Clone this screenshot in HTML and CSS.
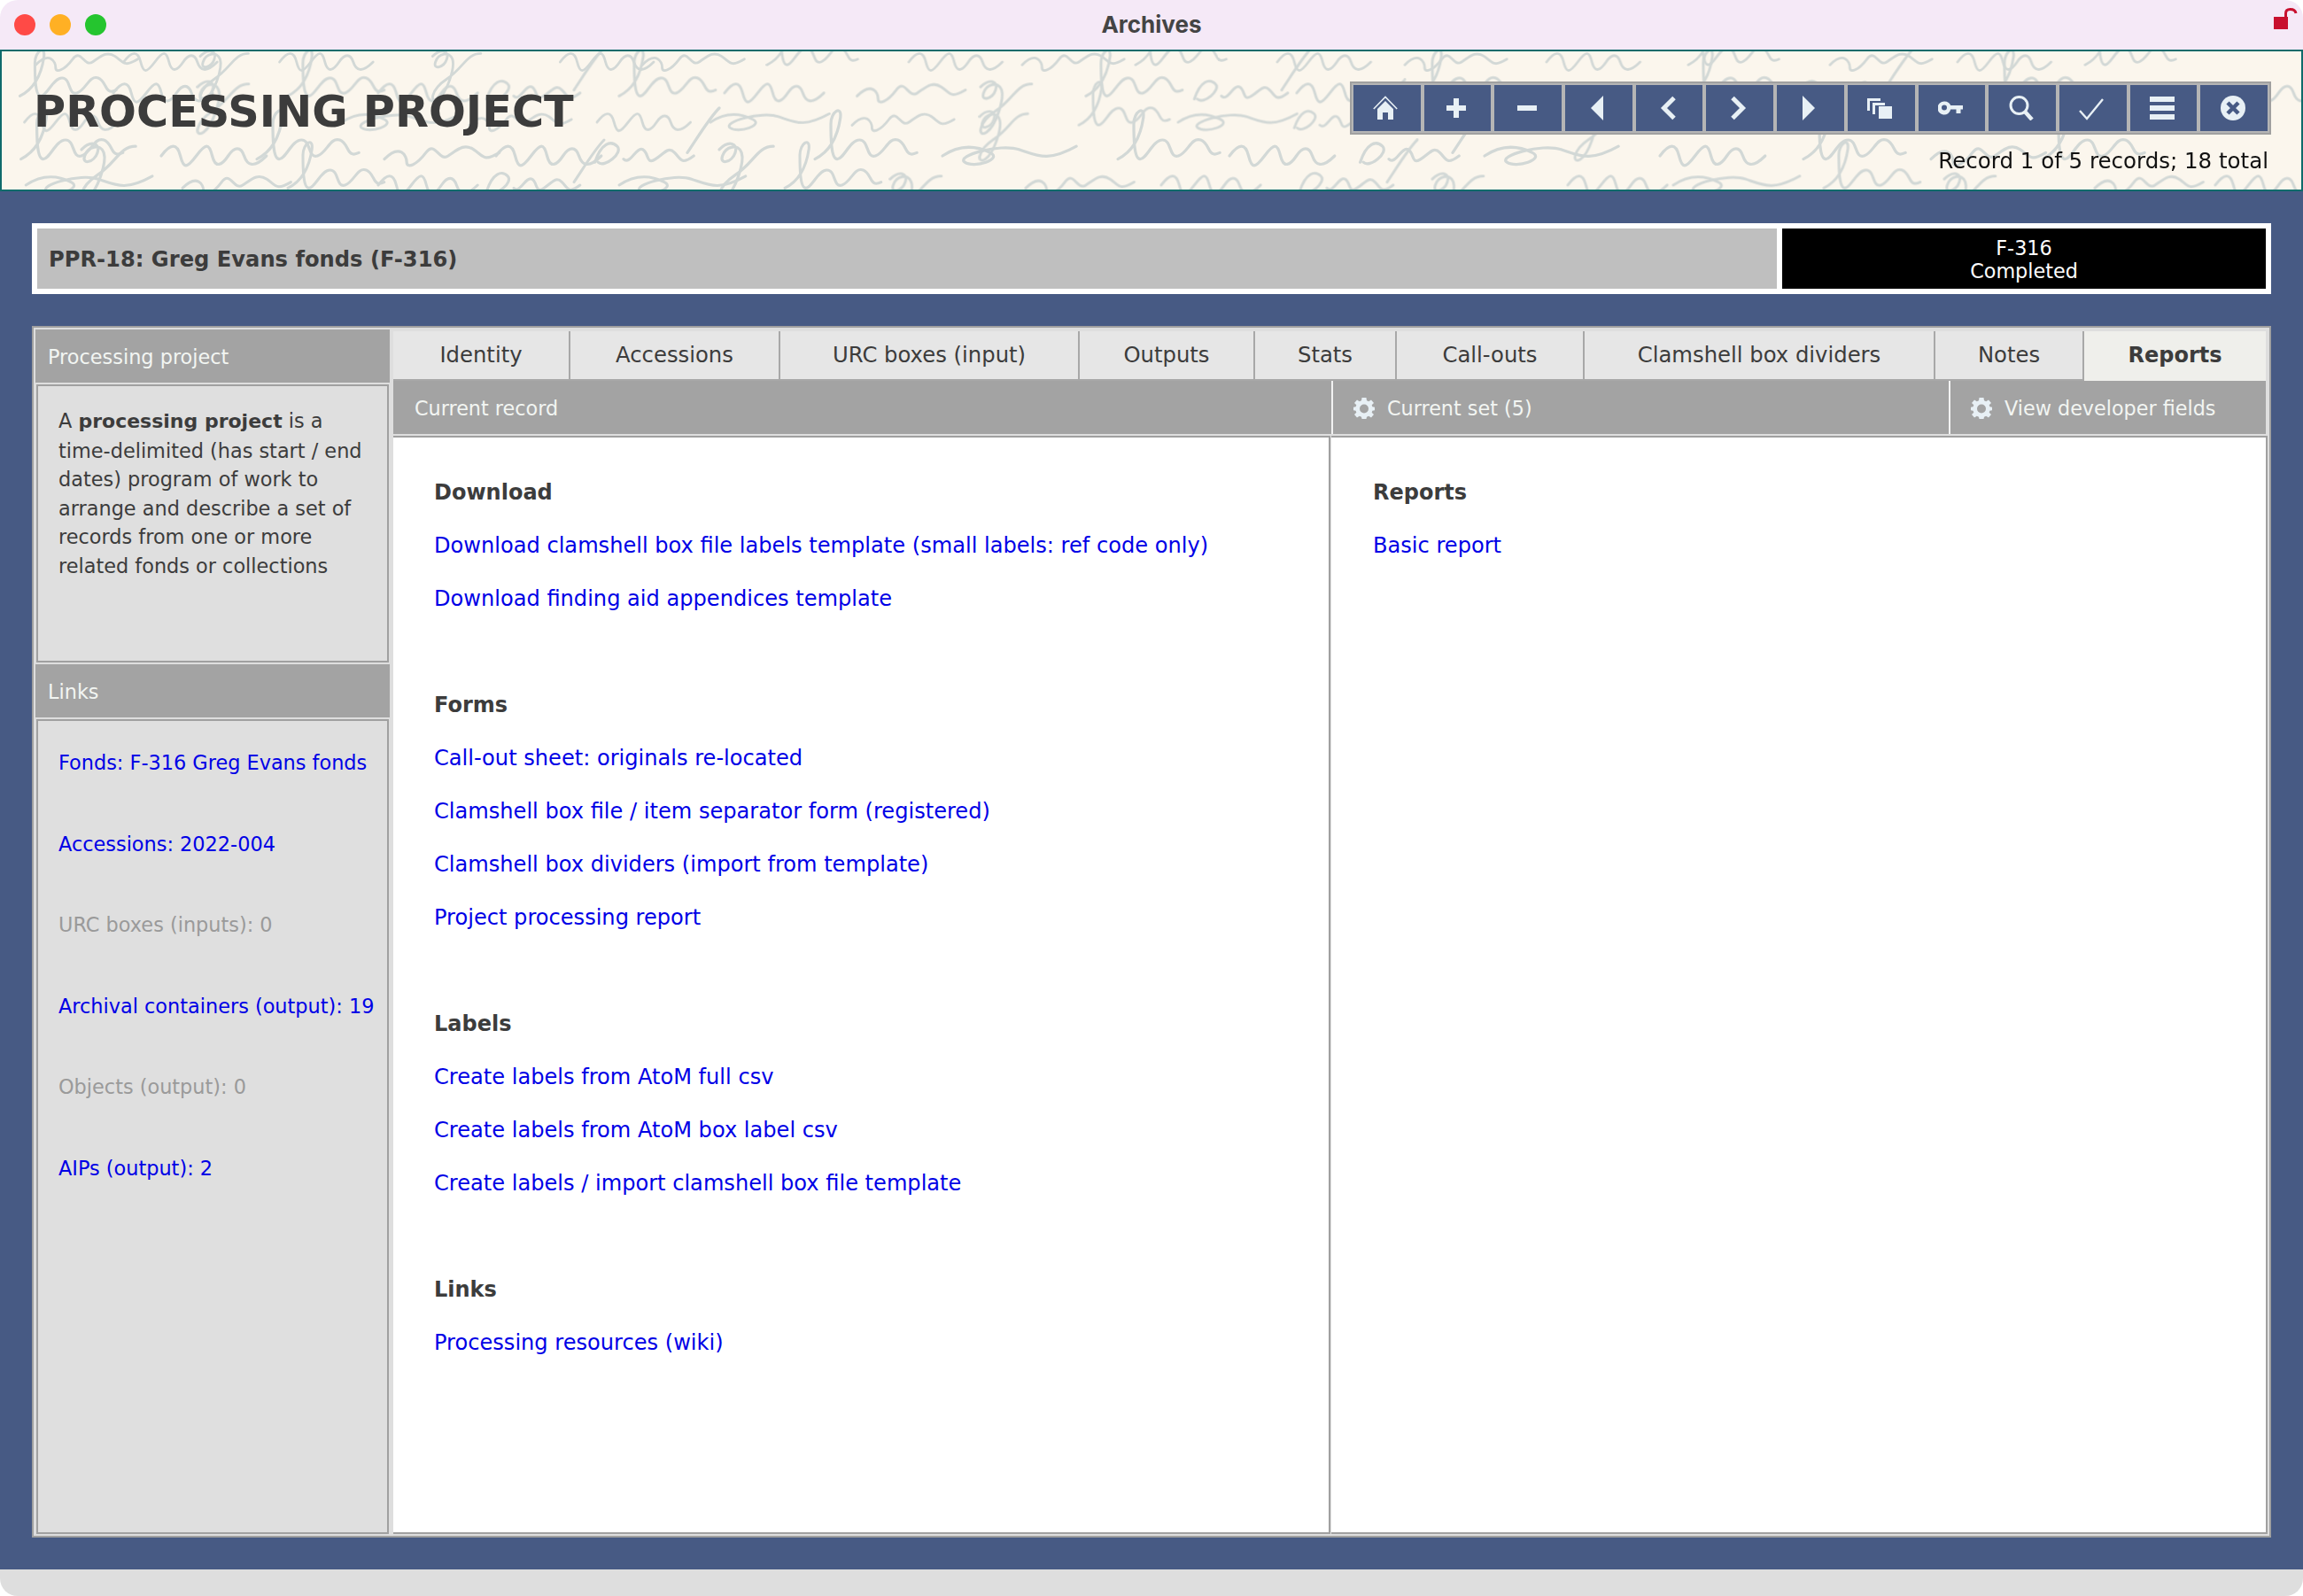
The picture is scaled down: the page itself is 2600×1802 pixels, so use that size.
FILE: index.html
```html
<!DOCTYPE html>
<html lang="en">
<head>
    <meta charset="UTF-8">
    <title>Archives</title>
    <link rel="stylesheet" href="styles.css">
</head>
<body>
<div class="window">
    <div class="titlebar">
        <div class="lights">
            <span class="light red"></span>
            <span class="light amber"></span>
            <span class="light green"></span>
        </div>
        <div class="window-title">Archives</div>
        <svg class="lock" viewBox="0 0 27 24"><rect x="0" y="10" width="16" height="14" fill="#c8102e"/><path d="M13.500 11V6C13.500 3 15.500 1.500 18.500 1.500C22 1.500 24.500 3 25 6" fill="none" stroke="#c8102e" stroke-width="3"/></svg>
    </div>

    <div class="page-header">
        <svg class="script" viewBox="0 0 2596 156" preserveAspectRatio="none">
            <defs>
                <path id="w1" d="M0 10c6-8 10-8 12 0s4 8 10 0 8-8 10 0 6 6 10 0 8-6 10 0 6 8 14 0"/>
                <path id="w2" d="M0 12c8-4 14-12 16-26 1-8-6-4-6 4s0 22 4 22 8-12 14-12 4 12 10 10 8-12 14-10 4 12 12 8"/>
                <path id="w3" d="M0 6c6-6 12-4 10 2s-10 8-8 2 10-8 12-2-4 24-10 28-6-6 6-14 14-18 24-18"/>
                <path id="w4" d="M0 12c10-10 14-2 14 2s6 2 12-6 8 6 14 2 10-8 16-4 6 8 16 2"/>
                <path id="w5" d="M2 14c4-12 10-14 14-10s-8 14-12 10M20 12c4 4 8-8 12-6s2 10 8 6 8-8 12-4 4 8 12 2M60 8c8-12 14-22 20-28"/>
                <path id="w6" d="M0 10c12-8 22-6 30-2s-10 10-16 6 22-12 34-8 18 8 36-2"/>
            </defs>
            <g class="script-lines" fill="none" stroke-width="1.800" stroke-linecap="round" stroke-linejoin="round">
                <g transform="translate(0,-4) scale(1.600)">
                    <use href="#w4" x="24"/><use href="#w1" x="86"/><use href="#w3" x="140"/><use href="#w1" x="196"/><use href="#w3" x="304"/><use href="#w1" x="394"/><use href="#w4" x="452"/><use href="#w2" x="540"/><use href="#w1" x="640"/><use href="#w4" x="720"/><use href="#w2" x="800"/><use href="#w1" x="900"/><use href="#w4" x="990"/><use href="#w1" x="1090"/><use href="#w2" x="1190"/><use href="#w4" x="1290"/><use href="#w1" x="1380"/><use href="#w2" x="1470"/>
                </g>
                <g transform="translate(0,30) scale(1.700)">
                    <use href="#w2" x="12"/><use href="#w1" x="74"/><use href="#w3" x="130"/><use href="#w2" x="190"/><use href="#w1" x="250"/><use href="#w5" x="320"/><use href="#w2" x="410"/><use href="#w1" x="480"/><use href="#w4" x="568"/><use href="#w3" x="650"/><use href="#w2" x="720"/><use href="#w5" x="790"/><use href="#w1" x="860"/><use href="#w2" x="940"/><use href="#w6" x="1000"/><use href="#w2" x="1120"/><use href="#w5" x="1190"/><use href="#w1" x="1260"/><use href="#w2" x="1320"/><use href="#w4" x="1400"/><use href="#w1" x="1470"/>
                </g>
                <g transform="translate(0,64) scale(1.600)">
                    <use href="#w1" x="16"/><use href="#w6" x="240"/><use href="#w4" x="330"/><use href="#w1" x="420"/><use href="#w6" x="500"/><use href="#w4" x="600"/><use href="#w3" x="690"/><use href="#w2" x="760"/><use href="#w6" x="830"/><use href="#w5" x="910"/><use href="#w1" x="1010"/><use href="#w3" x="1110"/><use href="#w4" x="1200"/><use href="#w2" x="1300"/><use href="#w1" x="1390"/><use href="#w6" x="1480"/>
                </g>
                <g transform="translate(0,100) scale(1.800)">
                    <use href="#w2" x="12"/><use href="#w3" x="50"/><use href="#w1" x="100"/><use href="#w2" x="160"/><use href="#w4" x="240"/><use href="#w1" x="310"/><use href="#w5" x="370"/><use href="#w3" x="450"/><use href="#w2" x="510"/><use href="#w6" x="590"/><use href="#w2" x="700"/><use href="#w1" x="770"/><use href="#w5" x="850"/><use href="#w6" x="930"/><use href="#w1" x="1040"/><use href="#w2" x="1130"/><use href="#w4" x="1210"/><use href="#w2" x="1280"/>
                </g>
                <g transform="translate(0,134) scale(1.700)">
                    <use href="#w6" x="16"/><use href="#w4" x="120"/><use href="#w2" x="190"/><use href="#w1" x="250"/><use href="#w5" x="320"/><use href="#w6" x="410"/><use href="#w2" x="520"/><use href="#w3" x="590"/><use href="#w4" x="680"/><use href="#w1" x="770"/><use href="#w5" x="860"/><use href="#w3" x="950"/><use href="#w1" x="1040"/><use href="#w6" x="1110"/><use href="#w2" x="1210"/><use href="#w3" x="1290"/><use href="#w4" x="1390"/><use href="#w1" x="1470"/>
                </g>
            </g>
        </svg>
        <h1>PROCESSING PROJECT</h1>
        <div class="toolbar-wrap">
            <div class="toolbar">
                <a class="tool"><svg viewBox="0 0 28 28"><path d="M5 15L14 6L23 15V27H17V19H11V27H5Z"/><path d="M0.800 15L14 1.500L27.200 15" fill="none" stroke="#e8f0f5" stroke-width="1.600"/></svg></a>
                <a class="tool"><svg viewBox="0 0 28 28"><path d="M11 3H17V11H25V17H17V25H11V17H3V11H11Z"/></svg></a>
                <a class="tool"><svg viewBox="0 0 28 28"><rect x="3" y="11" width="22" height="6"/></svg></a>
                <a class="tool"><svg viewBox="0 0 28 28"><path d="M21 0V28L7 14Z"/></svg></a>
                <a class="tool"><svg viewBox="0 0 28 28"><path d="M21 2.500L9.500 14L21 25.500" fill="none" stroke="#e8f0f5" stroke-width="5"/></svg></a>
                <a class="tool"><svg viewBox="0 0 28 28"><path d="M7 2.500L18.500 14L7 25.500" fill="none" stroke="#e8f0f5" stroke-width="5"/></svg></a>
                <a class="tool"><svg viewBox="0 0 28 28"><path d="M7 0V28L21 14Z"/></svg></a>
                <a class="tool"><svg viewBox="0 0 28 28"><path d="M0 3H15V6H3V17H0Z"/><path d="M6 8H20V11H9V21H6Z"/><rect x="13" y="12" width="15" height="14"/></svg></a>
                <a class="tool"><svg viewBox="0 0 28 28"><path fill-rule="evenodd" d="M7 6.500A7.500 7.500 0 0 1 14.200 11H28V15.500H25.500V20H20.500V15.500H14.200A7.500 7.500 0 1 1 7 6.500ZM7 10.500A3 3 0 1 0 7 16.500A3 3 0 1 0 7 10.500Z"/></svg></a>
                <a class="tool"><svg viewBox="0 0 28 28"><circle cx="11.500" cy="11" r="9.500" fill="none" stroke="#e8f0f5" stroke-width="3"/><path d="M18 18L26 27" fill="none" stroke="#e8f0f5" stroke-width="4.500"/></svg></a>
                <a class="tool"><svg viewBox="0 0 28 28"><path d="M1 17L9 26L27 4" fill="none" stroke="#e8f0f5" stroke-width="2.400"/></svg></a>
                <a class="tool"><svg viewBox="0 0 28 28"><rect x="0" y="1" width="28" height="6"/><rect x="0" y="11" width="28" height="6"/><rect x="0" y="21" width="28" height="6"/></svg></a>
                <a class="tool"><svg viewBox="0 0 28 28"><circle cx="14" cy="14" r="14"/><path d="M8 8L20 20M20 8L8 20" fill="none" stroke="#475a84" stroke-width="4.500"/></svg></a>
            </div>
            <div class="record-count">Record 1 of 5 records; 18 total</div>
        </div>
    </div>

    <div class="main">
        <div class="record-bar">
            <div class="record-name">PPR-18: Greg Evans fonds (F-316)</div>
            <div class="record-status">F-316<br>Completed</div>
        </div>

        <div class="panel">
            <div class="sidebar">
                <div class="side-head">Processing project</div>
                <div class="side-box about">
                    A <b>processing project</b> is a<br>
                    time-delimited (has start / end dates) program of work to arrange and describe a set of records from one or more related fonds or collections
                </div>
                <div class="side-head">Links</div>
                <div class="side-box links">
                    <a href="#">Fonds: F-316 Greg Evans fonds</a>
                    <a href="#">Accessions: 2022-004</a>
                    <span>URC boxes (inputs): 0</span>
                    <a href="#">Archival containers (output): 19</a>
                    <span>Objects (output): 0</span>
                    <a href="#">AIPs (output): 2</a>
                </div>
            </div>

            <div class="content">
                <div class="tabs">
                    <div class="tab">Identity</div>
                    <div class="tab">Accessions</div>
                    <div class="tab">URC boxes (input)</div>
                    <div class="tab">Outputs</div>
                    <div class="tab">Stats</div>
                    <div class="tab">Call-outs</div>
                    <div class="tab">Clamshell box dividers</div>
                    <div class="tab">Notes</div>
                    <div class="tab active">Reports</div>
                </div>
                <div class="subhead">
                    <div class="sub-cell">Current record</div>
                    <div class="sub-cell">
                        <svg class="gear" viewBox="0 0 24 24"><path fill-rule="evenodd" d="M9.500 0H14.500L15 3.300L17.200 4.300L20 2.400L23 5.900L20.700 8.300L21.400 10.300L24 10.800V14.200L21.400 14.700L20.700 16.700L23 19.100L20 22.600L17.200 20.700L15 21.700L14.500 24H9.500L9 21.700L6.800 20.700L4 22.600L1 19.100L3.300 16.700L2.600 14.700L0 14.200V10.800L2.600 10.300L3.300 8.300L1 5.900L4 2.400L6.800 4.300L9 3.300ZM12 7.500A5 5 0 1 0 12 17.500A5 5 0 1 0 12 7.500Z"/></svg>
                        Current set (5)
                    </div>
                    <div class="sub-cell">
                        <svg class="gear" viewBox="0 0 24 24"><path fill-rule="evenodd" d="M9.500 0H14.500L15 3.300L17.200 4.300L20 2.400L23 5.900L20.700 8.300L21.400 10.300L24 10.800V14.200L21.400 14.700L20.700 16.700L23 19.100L20 22.600L17.200 20.700L15 21.700L14.500 24H9.500L9 21.700L6.800 20.700L4 22.600L1 19.100L3.300 16.700L2.600 14.700L0 14.200V10.800L2.600 10.300L3.300 8.300L1 5.900L4 2.400L6.800 4.300L9 3.300ZM12 7.500A5 5 0 1 0 12 17.500A5 5 0 1 0 12 7.500Z"/></svg>
                        View developer fields
                    </div>
                </div>
                <div class="panes">
                    <div class="pane pane-left">
                        <section>
                            <h3>Download</h3>
                            <a href="#">Download clamshell box file labels template (small labels: ref code only)</a>
                            <a href="#">Download finding aid appendices template</a>
                        </section>
                        <section>
                            <h3>Forms</h3>
                            <a href="#">Call-out sheet: originals re-located</a>
                            <a href="#">Clamshell box file / item separator form (registered)</a>
                            <a href="#">Clamshell box dividers (import from template)</a>
                            <a href="#">Project processing report</a>
                        </section>
                        <section>
                            <h3>Labels</h3>
                            <a href="#">Create labels from AtoM full csv</a>
                            <a href="#">Create labels from AtoM box label csv</a>
                            <a href="#">Create labels / import clamshell box file template</a>
                        </section>
                        <section>
                            <h3>Links</h3>
                            <a href="#">Processing resources (wiki)</a>
                        </section>
                    </div>
                    <div class="pane pane-right">
                        <section>
                            <h3>Reports</h3>
                            <a href="#">Basic report</a>
                        </section>
                    </div>
                </div>
            </div>
        </div>
    </div>

    <div class="footer"></div>
</div>
</body>
</html>
```

FILE: styles.css
```css
* {
    box-sizing: border-box;
}

html, body {
    margin: 0;
    height: 100%;
}

body {
    font-family: "DejaVu Sans", Verdana, sans-serif;
    font-size: 24px;
    color: #3c3c3c;
    background-color: #fff;
}

a {
    color: #0000e6;
    text-decoration: none;
}

.window {
    display: flex;
    flex-direction: column;
    height: 1802px;
    border-radius: 20px;
    overflow: hidden;
}

/* title bar */
.titlebar {
    position: relative;
    height: 56px;
    background-color: #f5e9f7;
    display: flex;
    align-items: center;
    justify-content: center;
    padding-bottom: 2px;
}

.lights {
    position: absolute;
    left: 16px;
    top: 16px;
    display: flex;
    gap: 16px;
}

.light {
    width: 24px;
    height: 24px;
    border-radius: 50%;
}

.red { background-color: #ff4a46; }
.amber { background-color: #ffb024; }
.green { background-color: #25c52f; }

.window-title {
    font-family: Inter, sans-serif;
    font-weight: 700;
    font-size: 26px;
    color: #444;
}

.lock {
    position: absolute;
    right: 6px;
    top: 9px;
    width: 27px;
    height: 24px;
}

/* header with handwriting background */
.page-header {
    position: relative;
    height: 160px;
    background-color: #fbf6ed;
    border: 2px solid #0f6b6b;
    display: flex;
    justify-content: space-between;
    padding: 0 34px 0 36px;
}

.script {
    position: absolute;
    left: 0;
    top: 0;
    width: 100%;
    height: 100%;
}

.script-lines {
    stroke: #d2d8d6;
    filter: blur(0.7px);
}

.page-header h1 {
    position: relative;
    margin: 40px 0 0;
    font-size: 49.300px;
    line-height: 56px;
    font-weight: bold;
    color: #3c3c3c;
}

.toolbar-wrap {
    position: relative;
    margin-top: 34px;
    display: flex;
    flex-direction: column;
    align-items: flex-end;
}

.toolbar {
    display: grid;
    grid-template-columns: repeat(13, 1fr);
    gap: 4px;
    width: 1040px;
    height: 60px;
    padding: 2px;
    background-color: #b5b5b5;
    border: 2px solid #a0a0a0;
}

.tool {
    background-color: #475a84;
    display: flex;
    align-items: center;
    justify-content: center;
    padding-right: 3px;
}

.tool svg {
    width: 28px;
    height: 28px;
    fill: #e8f0f5;
}

.record-count {
    margin-top: 15px;
    line-height: 30px;
    font-size: 24.500px;
    color: #111;
    padding-right: 3px;
}

/* main area */
.main {
    flex: 1;
    background-color: #475a84;
    padding: 36px;
    display: flex;
    flex-direction: column;
    gap: 36px;
}

.footer {
    height: 30px;
    background-color: #dedede;
}

.record-bar {
    height: 80px;
    background-color: #fff;
    padding: 6px;
    display: flex;
    gap: 6px;
}

.record-name {
    flex: 1;
    background-color: #bfbfbf;
    padding: 1px 0 0 13px;
    display: flex;
    align-items: center;
    font-weight: bold;
    font-size: 24.200px;
}

.record-status {
    width: 546px;
    background-color: #000;
    color: #fff;
    text-align: center;
    font-size: 22.300px;
    line-height: 26px;
    padding-top: 9px;
}

.panel {
    flex: 1;
    border: 2px solid #a0a0a0;
    padding: 2px;
    background-color: #dedede;
    display: flex;
    gap: 4px;
}

/* left column */
.sidebar {
    width: 400px;
    display: flex;
    flex-direction: column;
    font-size: 22.400px;
}

.side-head {
    height: 60px;
    line-height: 62px;
    padding-left: 14px;
    background-color: #a3a3a3;
    color: #f2f5f2;
    flex-shrink: 0;
}

.side-box {
    margin: 2px 1px;
    border: 2px solid #a0a0a0;
    background-color: #dfdfdf;
    padding-left: 23px;
}

.about {
    height: 314px;
    padding-top: 23px;
    padding-right: 10px;
    line-height: 32.600px;
}

.about b {
    font-size: 22px;
}

.links {
    flex: 1;
    margin-bottom: 0;
    padding-top: 32px;
    display: flex;
    flex-direction: column;
    gap: 61.600px;
    line-height: 30px;
    color: #9a9a9a;
}

/* right column */
.content {
    flex: 1;
    display: flex;
    flex-direction: column;
    padding-top: 2px;
}

.tabs {
    display: grid;
    grid-template-columns: 200px 237px 338px 198px 160px 212px 396px 168px 205px;
    height: 56px;
}

.tab {
    display: flex;
    align-items: center;
    justify-content: center;
    background-color: #e6e6e6;
    border-right: 2px solid #a8a8a8;
    border-bottom: 2px solid #a8a8a8;
    padding-bottom: 2px;
    font-size: 24.300px;
}

.tab.active {
    background-color: #efefeb;
    border: 0;
    font-weight: bold;
    font-size: 24px;
}

.subhead {
    display: flex;
    height: 60px;
    background-color: #a3a3a3;
    color: #f2f5f2;
    margin-right: 2px;
    font-size: 22.300px;
}

.sub-cell {
    display: flex;
    align-items: center;
    gap: 14px;
    padding: 2px 0 0 23px;
    border-left: 2px solid #f2f2f2;
}

.sub-cell:nth-child(1) {
    width: 1059px;
    border-left: 0;
    padding-left: 24px;
}

.sub-cell:nth-child(2) {
    width: 697px;
}

.sub-cell:nth-child(3) {
    flex: 1;
}

.gear {
    width: 24px;
    height: 24px;
    fill: #e8f0f5;
}

.panes {
    flex: 1;
    margin-top: 2px;
    display: flex;
    gap: 1px;
}

.pane {
    background-color: #fff;
    border: 2px solid #a0a0a0;
    border-left: 0;
    padding-top: 47px;
    font-size: 24.100px;
}

.pane-left {
    width: 1058px;
    padding-left: 46px;
}

.pane-right {
    flex: 1;
    padding-left: 47px;
}

.pane section {
    display: flex;
    flex-direction: column;
    align-items: flex-start;
    gap: 30px;
    margin-bottom: 90px;
    line-height: 30px;
}

.pane h3 {
    margin: 0;
    font-size: 24px;
    line-height: 30px;
}
```
